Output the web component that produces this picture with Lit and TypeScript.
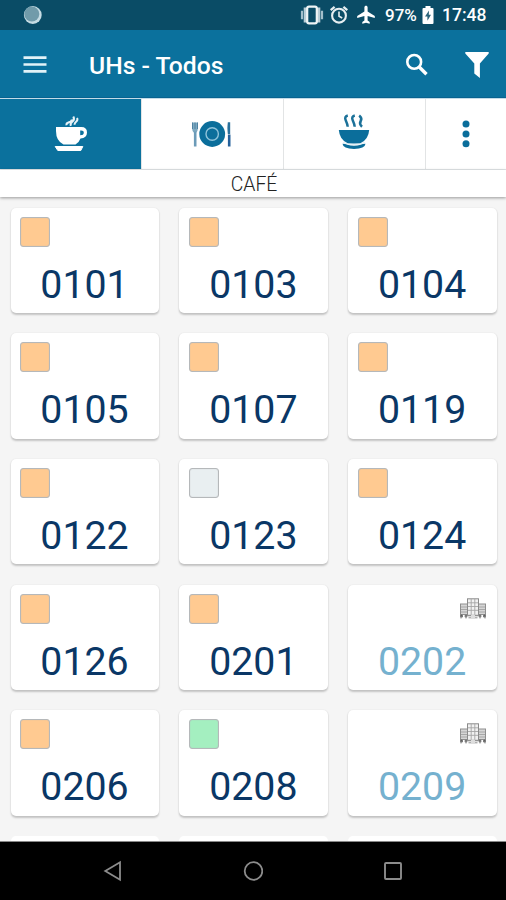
import { LitElement, html, svg, css } from "lit";
import { customElement, property } from "lit/decorators.js";

type Status = "orange" | "grey" | "green" | "company";

const ROOMS: { id: string; status: Status }[] = [
  { id: "0101", status: "orange" },
  { id: "0103", status: "orange" },
  { id: "0104", status: "orange" },
  { id: "0105", status: "orange" },
  { id: "0107", status: "orange" },
  { id: "0119", status: "orange" },
  { id: "0122", status: "orange" },
  { id: "0123", status: "grey" },
  { id: "0124", status: "orange" },
  { id: "0126", status: "orange" },
  { id: "0201", status: "orange" },
  { id: "0202", status: "company" },
  { id: "0206", status: "orange" },
  { id: "0208", status: "green" },
  { id: "0209", status: "company" },
];

const icon = (w: number, h: number, body: unknown) =>
  html`<svg width=${w} height=${h} viewBox="0 0 ${w} ${h}" fill="none">${body}</svg>`;

const vibrate = icon(24, 20, svg`
  <path d="M5.500 2.500V17.500M18.500 2.500V17.500" stroke="#b9ced7" stroke-width="3.600"/>
  <path d="M2 5.800V14.200M22 5.800V14.200" stroke="#a3bfcb" stroke-width="2.200"/>
  <rect x="7.200" y="1.700" width="9.600" height="16.600" rx="1.800" stroke="#eef4f6" stroke-width="2.200" fill="#0a4c66"/>`);
const alarm = icon(20, 20, svg`
  <circle cx="10" cy="10.700" r="6.900" stroke="#e6eef1" stroke-width="2.100"/>
  <path d="M1.700 5.200 5.600 1.900M18.300 5.200 14.400 1.900" stroke="#e6eef1" stroke-width="2.200"/>
  <path d="M10 6.600V11.200L13.200 13" stroke="#e6eef1" stroke-width="1.600"/>`);
const plane = icon(20, 20, svg`
  <path d="M18.800 13V11L11.600 6.500V2.300C11.600 1.300 10.900.7 10 .7S8.400 1.300 8.400 2.300V6.500L1.200 11V13L8.400 10.900V15.500L6.300 17V18.700L10 17.700 13.700 18.700V17L11.600 15.500V10.900Z" fill="#fff"/>`);
const battery = icon(12, 20, svg`
  <path d="M3.500 1H8.500V3H10.500Q11.500 3 11.500 4V18Q11.500 19 10.500 19H1.500Q.5 19 .5 18V4Q.5 3 1.500 3H3.500Z" fill="#fff"/>
  <path d="M7 5.500 3 11.500H5.400V15.800L9 9.800H6.800Z" fill="#2b647b"/>`);
const moon = icon(20, 20, svg`
  <circle cx="9.800" cy="10" r="8.900" fill="#c6dce4"/><circle cx="8.800" cy="9" r="7.500" fill="#719baa"/>`);
const menu = icon(24, 20, svg`
  <path d="M.5 2.700H23.500M.5 9.500H23.500M.5 16.300H23.500" stroke="#e2f2f8" stroke-width="2.700"/>`);
const search = icon(24, 24, svg`
  <circle cx="9.200" cy="8.900" r="6.900" stroke="#fff" stroke-width="2.600"/>
  <path d="M14 13.700 21.500 21.200" stroke="#fff" stroke-width="3.400"/>`);
const funnel = icon(24, 28, svg`
  <path d="M.3 1H23.700V2.500L14.900 12.500V27L9.300 22.500V12.500L.3 2.500Z" fill="#fff"/>`);
const cup = icon(34, 38, svg`
  <path d="M2 12H27.300Q33 12 33 17.500T26.500 23.500Q25 27.500 21.500 29.500H9.500Q2 26 2 16ZM26.200 15.600V20.200Q29.800 20.200 29.800 17.700T26.200 15.600Z" fill="#fff" fill-rule="evenodd"/>
  <path d="M1.200 31.500H28.800L26.800 35.500H3.800Z" fill="#fff" stroke="#fff" stroke-linejoin="round"/>
  <path d="M12.500 10.200Q12 8.200 15 7.300T17.500 4.400M16.800 10.800Q16 8.600 18.500 6.500T19.300 1.500M20.500 9.800Q20.500 8 22.300 6.500T23 3" stroke="#e7f2f7" stroke-width="2"/>`);
const plate = icon(42, 30, svg`
  <circle cx="21.200" cy="15" r="12.900" fill="#0b6e9b"/>
  <circle cx="21.200" cy="15" r="6.200" stroke="#8fc3da" stroke-width="1.400"/>
  <path d="M1.200 3.500V9.500Q1.200 13.300 4 14Q6.800 13.300 6.800 9.500V3.500" fill="#7ea9c0"/>
  <path d="M1.500 3.500V10M4 3.500V10M6.500 3.500V10" stroke="#4f82a2" stroke-width="1"/>
  <path d="M4.200 12.500V27.500" stroke="#6c9bb8" stroke-width="2.600"/>
  <path d="M36.800 3.200H39.200V15H36.800Q36 8 36.800 3.200Z" fill="#2a719c"/>
  <path d="M38.200 15.500V27.500" stroke="#24609a" stroke-width="2.600"/>`);
const bowl = icon(32, 36, svg`
  <path d="M.8 16H31.200Q30.500 25.700 22 29.500H10Q1.500 25.700.8 16Z" fill="#0b6e9b"/>
  <path d="M4.500 29.800Q7 29.700 9.300 30.800Q16 32.600 22.700 30.800Q25 29.700 27.500 29.800Q27 34.900 16 34.900T4.500 29.800Z" fill="#0b6e9b"/>
  <path d="M5 28.700Q8 29 10 29.900Q16 31.300 22 29.900Q24 29 27 28.700" stroke="#dcebf2" stroke-width=".9"/>
  <path d="M9.800 1.500Q6 2.500 7.800 6.500T9.700 12.700M16.800 1.500Q13 2.500 14.800 6.500T16.700 12.700M21.200 1.500Q24.500 4 22.700 7T24 12.700" stroke="#1b7199" stroke-width="2.500"/>`);
const dots = icon(8, 28, svg`
  <g fill="#0b6e9b"><circle cx="4" cy="4" r="3.500"/><circle cx="4" cy="14" r="3.500"/><circle cx="4" cy="23.800" r="3.500"/></g>`);
const building = icon(28, 22, svg`
  <rect x="1.500" y="6" width="7" height="10.500" fill="#d6d6d6" stroke="#8f8f8f"/>
  <rect x="19.500" y="6" width="7" height="10.500" fill="#d6d6d6" stroke="#8f8f8f"/>
  <path d="M2 9H8M2 11.500H8M2 14H8M20 9H26M20 11.500H26M20 14H26" stroke="#a2a2a2" stroke-width=".9"/>
  <rect x="8.500" y=".8" width="11" height="16.500" fill="#f1f1f1" stroke="#8b8b8b"/>
  <path d="M9 4.800H19M9 8.500H19M9 12.300H19M12.200 1V17M15.800 1V17" stroke="#a5a5a5" stroke-width=".9"/>
  <circle cx="2.500" cy="18" r="1.500" fill="#606060"/><circle cx="7" cy="18" r="1.500" fill="#777"/>
  <circle cx="21" cy="18" r="1.500" fill="#777"/><circle cx="25.500" cy="18" r="1.500" fill="#606060"/>
  <path d="M2 18V20.500M7 18V20.500M21 18V20.500M26 18V20.500" stroke="#888"/>
  <path d="M9 17.800H19M9.500 19.800H18.500" stroke="#8d8d8d"/>
  <rect x="12" y="16.800" width="4" height="4.200" fill="#ddd"/>`);
const back = icon(20, 22, svg`<path d="M17 2.300V19.700L2.300 11Z" stroke="#8c8c8c" stroke-width="1.800"/>`);
const home = icon(20, 22, svg`<circle cx="10.500" cy="11" r="8.800" stroke="#8c8c8c" stroke-width="1.800"/>`);
const recent = icon(20, 22, svg`<rect x="2" y="3" width="16" height="16" rx="1" stroke="#8c8c8c" stroke-width="1.900"/>`);

@customElement("room-card")
export class RoomCard extends LitElement {
  @property() room = "";
  @property() status: Status = "orange";

  static styles = css`
    :host { display: block; }
    .card {
      box-sizing: border-box; height: 105.500px; background: #fff; border-radius: 5px;
      box-shadow: 0 1.500px 2px rgba(0, 0, 0, 0.2), 0 0 2px rgba(0, 0, 0, 0.05);
      padding: 9px 10px 0 9.500px; display: flex; flex-direction: column;
    }
    .top { height: 30px; display: flex; }
    .top.company { justify-content: flex-end; padding-top: 4px; box-sizing: border-box; }
    .chip { box-sizing: border-box; width: 30px; height: 30px; border: 1.500px solid #b5b8ba; border-radius: 3px; box-shadow: inset 0 0 1px #b5b8ba; }
    .orange { background: #ffca91; }
    .grey { background: #e9eff1; }
    .green { background: #a4efc0; }
    .number { text-align: center; font-size: 39.300px; line-height: 48px; margin-top: 14px; color: #0a3766; }
    .number.company { color: #75b1cf; }
    svg { display: block; }
  `;

  render() {
    const company = this.status === "company";
    return html`<div class="card">
      <div class="top ${company ? "company" : ""}">
        ${company ? building : html`<span class="chip ${this.status}"></span>`}
      </div>
      <div class="number ${company ? "company" : ""}">${this.room}</div>
    </div>`;
  }
}

@customElement("app-root")
export class AppRoot extends LitElement {
  static styles = css`
    :host {
      display: flex; flex-direction: column; height: 900px; overflow: hidden;
      background: #f5f5f5; font-family: Roboto, "Liberation Sans", sans-serif;
    }
    svg { display: block; flex: none; }
    .status {
      flex: none; height: 30px; box-sizing: border-box; background: #0a4c66; color: #fff;
      display: flex; align-items: center; padding: 0 19px 0 23px; font-size: 17.500px; font-weight: 500;
    }
    .spacer { flex: 1; }
    .sys { display: flex; align-items: center; }
    .alarm { margin-left: 5px; }
    .plane { margin-left: 7px; }
    .pct { margin-left: 9px; font-size: 17px; width: 32px; white-space: nowrap; }
    .battery { margin-left: 5px; }
    .time { margin-left: 8px; width: 45px; white-space: nowrap; }
    .bar {
      flex: none; height: 68px; box-sizing: border-box; background: #0b719d; color: #fff;
      display: flex; align-items: center; padding: 3px 17px 0 23px; border-bottom: 1px solid #086390;
    }
    .title { margin: 0 0 0 42px; font-size: 24.700px; font-weight: 500; line-height: 30px; flex: 1; padding-top: 2px; }
    .funnel { margin-left: 36px; }
    .tabs {
      flex: none; height: 72px; box-sizing: border-box; background: #fff; display: grid;
      grid-template-columns: 141px 142px 142px 1fr; border-top: 1.500px solid #c3dce8; border-bottom: 1px solid #e4e8ea;
    }
    .tab { display: flex; align-items: center; justify-content: center; border-left: 1px solid #e2e4e5; }
    .plate { padding-right: 2px; }
    .bowl { padding: 0 1px 4px 0; }
    .active { background: #0b719d; border-left: 0; }
    .heading {
      flex: none; height: 27px; background: #fff; text-align: center; font-size: 19.400px; line-height: 30px;
      color: #222; padding-left: 2px; box-shadow: 0 1px 3px rgba(0, 0, 0, 0.38); font-weight: 300;
    }
    .rooms {
      flex: 1; min-height: 0; overflow: hidden; display: grid; align-content: start;
      grid-template-columns: repeat(3, 148.500px); column-gap: 20.300px; row-gap: 20.200px; padding: 10.500px 9px 0 10.500px;
    }
    .next { height: 20px; background: #fff; border-radius: 5px 5px 0 0; }
    .nav {
      flex: none; height: 59px; background: #000; display: flex; justify-content: center;
      align-items: center; gap: 120px; box-sizing: border-box; border-top: 1px solid #888;
    }
  `;

  render() {
    return html`
      <div class="status">
        ${moon}<span class="spacer"></span>
        <div class="sys">
          ${vibrate}<span class="alarm">${alarm}</span><span class="plane">${plane}</span>
          <span class="pct">97%</span><span class="battery">${battery}</span><span class="time">17:48</span>
        </div>
      </div>
      <header class="bar">
        ${menu}
        <h1 class="title">UHs - Todos</h1>
        ${search}<span class="funnel">${funnel}</span>
      </header>
      <nav class="tabs">
        <div class="tab active">${cup}</div>
        <div class="tab plate">${plate}</div>
        <div class="tab bowl">${bowl}</div>
        <div class="tab">${dots}</div>
      </nav>
      <div class="heading">CAFÉ</div>
      <main class="rooms">
        ${ROOMS.map((r) => html`<room-card .room=${r.id} .status=${r.status}></room-card>`)}
        <div class="next"></div><div class="next"></div><div class="next"></div>
      </main>
      <footer class="nav">${back}${home}${recent}</footer>
    `;
  }
}
